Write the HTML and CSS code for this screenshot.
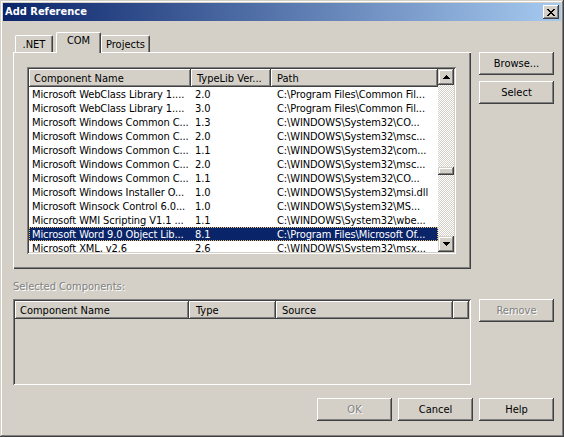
FILE: index.html
```html
<!DOCTYPE html>
<html>
<head>
<meta charset="utf-8">
<link rel="stylesheet" href="styles.css">
</head>
<body>
<div class="window">
  <div class="titlebar">
    <span class="title">Add Reference</span>
    <div class="close">
      <svg width="8" height="7" viewBox="0 0 8 7" shape-rendering="crispEdges">
        <rect x="0" y="0" width="2" height="1"/><rect x="6" y="0" width="2" height="1"/>
        <rect x="1" y="1" width="2" height="1"/><rect x="5" y="1" width="2" height="1"/>
        <rect x="2" y="2" width="4" height="1"/>
        <rect x="3" y="3" width="2" height="1"/>
        <rect x="2" y="4" width="4" height="1"/>
        <rect x="1" y="5" width="2" height="1"/><rect x="5" y="5" width="2" height="1"/>
        <rect x="0" y="6" width="2" height="1"/><rect x="6" y="6" width="2" height="1"/>
      </svg>
    </div>
  </div>
  <div class="content">
    <div class="top-row">
      <div class="tabbed">
        <div class="tabs">
          <div class="tab tab-net">.NET</div>
          <div class="tab tab-com active">COM</div>
          <div class="tab tab-proj">Projects</div>
        </div>
        <div class="panel">
          <div class="listview">
            <div class="lv-main">
              <div class="lv-header">
                <div class="hcell c-name">Component Name</div>
                <div class="hcell c-ver">TypeLib Ver...</div>
                <div class="hcell c-path">Path</div>
              </div>
              <div class="lv-rows">
                <div class="row"><span class="c-name">Microsoft WebClass Library 1....</span><span class="c-ver">2.0</span><span class="c-path">C:\Program Files\Common Fil...</span></div>
                <div class="row"><span class="c-name">Microsoft WebClass Library 1....</span><span class="c-ver">3.0</span><span class="c-path">C:\Program Files\Common Fil...</span></div>
                <div class="row"><span class="c-name">Microsoft Windows Common C...</span><span class="c-ver">1.3</span><span class="c-path">C:\WINDOWS\System32\CO...</span></div>
                <div class="row"><span class="c-name">Microsoft Windows Common C...</span><span class="c-ver">2.0</span><span class="c-path">C:\WINDOWS\System32\msc...</span></div>
                <div class="row"><span class="c-name">Microsoft Windows Common C...</span><span class="c-ver">1.1</span><span class="c-path">C:\WINDOWS\System32\com...</span></div>
                <div class="row"><span class="c-name">Microsoft Windows Common C...</span><span class="c-ver">2.0</span><span class="c-path">C:\WINDOWS\System32\msc...</span></div>
                <div class="row"><span class="c-name">Microsoft Windows Common C...</span><span class="c-ver">1.1</span><span class="c-path">C:\WINDOWS\System32\CO...</span></div>
                <div class="row"><span class="c-name">Microsoft Windows Installer O...</span><span class="c-ver">1.0</span><span class="c-path">C:\WINDOWS\System32\msi.dll</span></div>
                <div class="row"><span class="c-name">Microsoft Winsock Control 6.0...</span><span class="c-ver">1.0</span><span class="c-path">C:\WINDOWS\System32\MS...</span></div>
                <div class="row"><span class="c-name">Microsoft WMI Scripting V1.1 ...</span><span class="c-ver">1.1</span><span class="c-path">C:\WINDOWS\System32\wbe...</span></div>
                <div class="row selected"><span class="c-name">Microsoft Word 9.0 Object Lib...</span><span class="c-ver">8.1</span><span class="c-path">C:\Program Files\Microsoft Of...</span></div>
                <div class="row"><span class="c-name">Microsoft XML, v2.6</span><span class="c-ver">2.6</span><span class="c-path">C:\WINDOWS\System32\msx...</span></div>
              </div>
            </div>
            <div class="vscroll">
              <div class="sbtn">
                <svg width="7" height="4" viewBox="0 0 7 4" shape-rendering="crispEdges"><polygon points="3.5,0 7,4 0,4"/></svg>
              </div>
              <div class="track">
                <div class="thumb"></div>
              </div>
              <div class="sbtn">
                <svg width="7" height="4" viewBox="0 0 7 4" shape-rendering="crispEdges"><polygon points="0,0 7,0 3.5,4"/></svg>
              </div>
            </div>
          </div>
        </div>
      </div>
      <div class="side-buttons">
        <div class="btn">Browse...</div>
        <div class="btn">Select</div>
      </div>
    </div>
    <div class="label disabled">Selected Components:</div>
    <div class="bottom-row">
      <div class="sel-list">
        <div class="lv-header sel-header">
          <div class="hcell s-name">Component Name</div>
          <div class="hcell s-type">Type</div>
          <div class="hcell s-src">Source</div>
          <div class="hcell s-extra"></div>
        </div>
      </div>
      <div class="btn disabled remove">Remove</div>
    </div>
    <div class="footer">
      <div class="btn disabled">OK</div>
      <div class="btn">Cancel</div>
      <div class="btn">Help</div>
    </div>
  </div>
</div>
</body>
</html>
```
FILE: styles.css
```css
* { box-sizing: border-box; }
html, body { margin: 0; padding: 0; background: #d4d0c8; }
body {
  font-family: "DejaVu Sans Condensed", "DejaVu Sans", sans-serif;
  font-stretch: condensed;
  font-size: 11px;
  color: #000;
}
.window {
  width: 564px;
  height: 437px;
  background: #d4d0c8;
  padding: 3px;
  box-shadow: inset -1px -1px #404040, inset 1px 1px #d4d0c8, inset -2px -2px #808080, inset 2px 2px #fff;
  display: flex;
  flex-direction: column;
}
.titlebar {
  height: 18px;
  background: linear-gradient(to right, #0a246a, #a6caf0);
  display: flex;
  align-items: center;
  justify-content: space-between;
  padding: 0 2px 0 2px;
}
.title {
  color: #fff;
  font-weight: bold;
  font-size: 11px;
  line-height: 14px;
}
.close {
  width: 16px;
  height: 14px;
  background: #d4d0c8;
  box-shadow: inset -1px -1px #404040, inset 1px 1px #fff, inset -2px -2px #808080;
  display: flex;
  align-items: center;
  justify-content: center;
  padding-right: 1px;
}
.close svg { fill: #000; display: block; }

.content {
  flex: 1;
  padding: 11px 7px 0 10px;
  display: flex;
  flex-direction: column;
}
.top-row { display: flex; gap: 8px; }
.tabbed { width: 458px; display: flex; flex-direction: column; }
.tabs {
  height: 20px;
  display: flex;
  align-items: flex-end;
  padding-left: 2px;
  position: relative;
  z-index: 1;
}
.tab {
  height: 17px;
  background: #d4d0c8;
  border-top: 1px solid #fff;
  border-left: 1px solid #fff;
  border-right: 1px solid #404040;
  box-shadow: inset -1px 0 #808080;
  border-radius: 2px 2px 0 0;
  line-height: 15px;
  padding-top: 1px;
  text-align: center;
}
.tab-net { width: 38px; }
.tab-com {
  width: 45px;
  margin-left: 3px;
  height: 21px;
  margin-bottom: -1px;
  line-height: 15px;
  padding-top: 0;
}
.tab-proj { width: 49px; }

.panel {
  height: 217px;
  padding: 15px 0 0 14px;
  box-shadow: inset 1px 1px #fff, inset -1px -1px #404040, inset -2px -2px #808080;
}
.listview {
  width: 429px;
  height: 187px;
  padding: 2px;
  background: #fff;
  box-shadow: inset 1px 1px #808080, inset -1px -1px #fff, inset 2px 2px #404040, inset -2px -2px #d4d0c8;
  display: flex;
}
.lv-main { flex: 1; overflow: hidden; display: flex; flex-direction: column; }
.lv-header {
  display: flex;
  height: 18px;
  flex: none;
}
.hcell {
  height: 18px;
  line-height: 17px;
  padding-top: 1px;
  background: #d4d0c8;
  box-shadow: inset -1px -1px #404040, inset 1px 1px #fff, inset -2px -2px #808080;
  white-space: nowrap;
  overflow: hidden;
  flex: none;
}
.c-name { width: 162px; }
.c-ver { width: 80px; }
.c-path { width: 167px; }
.hcell.c-name { padding-left: 5px; }
.hcell.c-ver { padding-left: 6px; }
.hcell.c-path { padding-left: 6px; }
.lv-rows { overflow: hidden; flex: 1; }
.row {
  display: flex;
  height: 14px;
  line-height: 14px;
  padding-top: 1px;
  white-space: nowrap;
  letter-spacing: -0.1px;
}
.row span { overflow: hidden; flex: none; }
.row .c-name { padding-left: 3px; }
.row .c-ver { padding-left: 4px; }
.row .c-path { padding-left: 6px; }
.row.selected {
  background: #0a246a;
  color: #fff;
  outline: 1px dotted #e8c060;
  outline-offset: -1px;
}

.vscroll {
  width: 16px;
  flex: none;
  display: flex;
  flex-direction: column;
}
.sbtn {
  width: 16px;
  height: 16px;
  flex: none;
  background: #d4d0c8;
  box-shadow: inset -1px -1px #404040, inset 1px 1px #d4d0c8, inset -2px -2px #808080, inset 2px 2px #fff;
  display: flex;
  align-items: center;
  justify-content: center;
}
.sbtn svg { display: block; fill: #000; }
.track {
  flex: 1;
  background: repeating-conic-gradient(#fff 0 25%, #d4d0c8 0 50%) 0 0 / 2px 2px;
  padding-top: 82px;
}
.thumb {
  height: 8px;
  background: #d4d0c8;
  box-shadow: inset -1px -1px #404040, inset 1px 1px #d4d0c8, inset -2px -2px #808080, inset 2px 2px #fff;
}

.side-buttons {
  width: 75px;
  margin-top: 20px;
  display: flex;
  flex-direction: column;
  gap: 6px;
}
.btn {
  width: 75px;
  height: 23px;
  background: #d4d0c8;
  box-shadow: inset -1px -1px #404040, inset 1px 1px #fff, inset -2px -2px #808080, inset 2px 2px #d4d0c8;
  display: flex;
  align-items: center;
  justify-content: center;
  flex: none;
}
.disabled {
  color: #808080;
  text-shadow: 1px 1px 0 #fff;
}
.label {
  margin-top: 11px;
  height: 13px;
  line-height: 13px;
}
.bottom-row {
  margin-top: 6px;
  display: flex;
  gap: 8px;
  align-items: flex-start;
}
.sel-list {
  width: 458px;
  height: 86px;
  padding: 2px;
  background: #d4d0c8;
  box-shadow: inset 1px 1px #808080, inset -1px -1px #fff, inset 2px 2px #404040, inset -2px -2px #d4d0c8;
}
.s-name { width: 174px; padding-left: 5px; }
.s-type { width: 87px; padding-left: 7px; }
.s-src { width: 177px; padding-left: 6px; }
.s-extra { width: 16px; }
.footer {
  margin-top: 13px;
  display: flex;
  justify-content: flex-end;
  gap: 6px;
}
```
